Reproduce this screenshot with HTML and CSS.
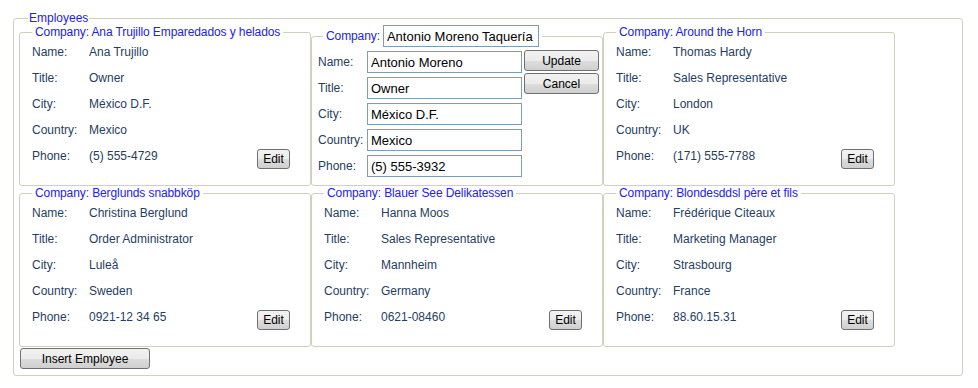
FILE: index.html
```html
<!DOCTYPE html>
<html lang="en">
  <head>
    <meta charset="UTF-8" />
    <title>Employees</title>
    <link rel="stylesheet" href="styles.css">
  </head>
  <body>
    <fieldset class="employees">
      <legend class="group-title">Employees</legend>
      <div class="card-grid">
        <fieldset class="card">
          <legend class="card-title">Company: Ana Trujillo Emparedados y helados</legend>
          <div class="fields">
            <span class="label">Name:</span><span class="value">Ana Trujillo</span>
            <span class="label">Title:</span><span class="value">Owner</span>
            <span class="label">City:</span><span class="value">México D.F.</span>
            <span class="label">Country:</span><span class="value">Mexico</span>
            <span class="label">Phone:</span><span class="value">(5) 555-4729</span>
            <button class="btn btn-edit">Edit</button>
          </div>
        </fieldset>

        <fieldset class="card card-editing">
          <legend class="card-title edit-title">
            <span>Company:</span>
            <input class="textbox company-box" type="text" value="Antonio Moreno Taquería" />
          </legend>
          <div class="edit-fields">
            <span class="label">Name:</span><input class="textbox" type="text" value="Antonio Moreno" />
            <div class="edit-actions">
              <button class="btn btn-wide">Update</button>
              <button class="btn btn-wide">Cancel</button>
            </div>
            <span class="label">Title:</span><input class="textbox" type="text" value="Owner" />
            <span class="label">City:</span><input class="textbox" type="text" value="México D.F." />
            <span class="label">Country:</span><input class="textbox" type="text" value="Mexico" />
            <span class="label">Phone:</span><input class="textbox" type="text" value="(5) 555-3932" />
          </div>
        </fieldset>

        <fieldset class="card">
          <legend class="card-title">Company: Around the Horn</legend>
          <div class="fields">
            <span class="label">Name:</span><span class="value">Thomas Hardy</span>
            <span class="label">Title:</span><span class="value">Sales Representative</span>
            <span class="label">City:</span><span class="value">London</span>
            <span class="label">Country:</span><span class="value">UK</span>
            <span class="label">Phone:</span><span class="value">(171) 555-7788</span>
            <button class="btn btn-edit">Edit</button>
          </div>
        </fieldset>

        <fieldset class="card">
          <legend class="card-title">Company: Berglunds snabbköp</legend>
          <div class="fields">
            <span class="label">Name:</span><span class="value">Christina Berglund</span>
            <span class="label">Title:</span><span class="value">Order Administrator</span>
            <span class="label">City:</span><span class="value">Luleå</span>
            <span class="label">Country:</span><span class="value">Sweden</span>
            <span class="label">Phone:</span><span class="value">0921-12 34 65</span>
            <button class="btn btn-edit">Edit</button>
          </div>
        </fieldset>

        <fieldset class="card">
          <legend class="card-title">Company: Blauer See Delikatessen</legend>
          <div class="fields">
            <span class="label">Name:</span><span class="value">Hanna Moos</span>
            <span class="label">Title:</span><span class="value">Sales Representative</span>
            <span class="label">City:</span><span class="value">Mannheim</span>
            <span class="label">Country:</span><span class="value">Germany</span>
            <span class="label">Phone:</span><span class="value">0621-08460</span>
            <button class="btn btn-edit">Edit</button>
          </div>
        </fieldset>

        <fieldset class="card">
          <legend class="card-title">Company: Blondesddsl père et fils</legend>
          <div class="fields">
            <span class="label">Name:</span><span class="value">Frédérique Citeaux</span>
            <span class="label">Title:</span><span class="value">Marketing Manager</span>
            <span class="label">City:</span><span class="value">Strasbourg</span>
            <span class="label">Country:</span><span class="value">France</span>
            <span class="label">Phone:</span><span class="value">88.60.15.31</span>
            <button class="btn btn-edit">Edit</button>
          </div>
        </fieldset>
      </div>
      <button class="btn btn-insert">Insert Employee</button>
    </fieldset>
  </body>
</html>
```

FILE: styles.css
```css
body {
  margin: 0;
  background: #ffffff;
  font-family: "Liberation Sans", Arial, sans-serif;
  font-size: 12px;
  color: #1f4060;
}
fieldset {
  margin: 0;
  min-width: 0;
  border: 1px solid #d0d0bf;
  border-radius: 3px;
}
legend {
  line-height: 14px;
  color: #2222ee;
}
.employees {
  width: 950px;
  height: 365px;
  box-sizing: border-box;
  margin: 11px 0 0 13px;
  padding: 0 5px 5px 5px;
}
.group-title {
  margin-left: 9px;
  padding: 0 1px;
}
.card-grid {
  display: grid;
  grid-template-columns: 292px 292px 292px;
  grid-template-rows: 161px 161px;
}
.card {
  padding: 0 20px 0 12px;
}
.card-title {
  padding: 0 3px;
  letter-spacing: -0.1px;
}
.fields {
  display: grid;
  grid-template-columns: 57px 1fr auto;
  grid-auto-rows: 26px;
  align-items: center;
}
.fields .value {
  grid-column: 2 / 4;
}
.fields .value:nth-of-type(10) {
  grid-column: 2;
}
.btn-edit {
  grid-column: 3;
  grid-row: 5;
  margin-top: 5px;
}
.btn {
  font-family: "Liberation Sans", Arial, sans-serif;
  font-size: 12px;
  color: #000000;
  height: 20px;
  padding: 0 4px;
  border: 1px solid #707070;
  border-radius: 3px;
  background: linear-gradient(#f2f2f2 0%, #ebebeb 50%, #dddddd 51%, #cfcfcf 100%);
}
.btn-edit {
  width: 33px;
}
.btn-insert {
  width: 130px;
  height: 21px;
  margin: 1px 0 0 1px;
}

/* card in edit mode */
.card-editing {
  padding: 0 4px 0 6px;
}
.edit-title {
  display: flex;
  align-items: center;
  margin-left: 5px;
  line-height: 22px;
}
.edit-title span {
  margin-right: 3px;
}
.textbox {
  box-sizing: border-box;
  height: 22px;
  width: 155px;
  margin: 0;
  padding: 0 3px;
  border: 1px solid #7f9db9;
  font-family: "Liberation Sans", Arial, sans-serif;
  font-size: 13px;
  color: #000000;
}
.company-box {
  width: 156px;
}
.edit-fields {
  display: grid;
  grid-template-columns: 47px 155px 75px;
  grid-auto-rows: 22px;
  row-gap: 4px;
  column-gap: 2px;
  align-items: center;
  margin-top: 4px;
}
.edit-fields .label {
  grid-column: 1;
}
.edit-fields .textbox {
  grid-column: 2;
}
.edit-actions {
  grid-column: 3;
  grid-row: 1 / 3;
  align-self: start;
  display: flex;
  flex-direction: column;
  gap: 2px;
  margin-top: -1px;
}
.btn-wide {
  width: 75px;
  height: 21px;
}
```
